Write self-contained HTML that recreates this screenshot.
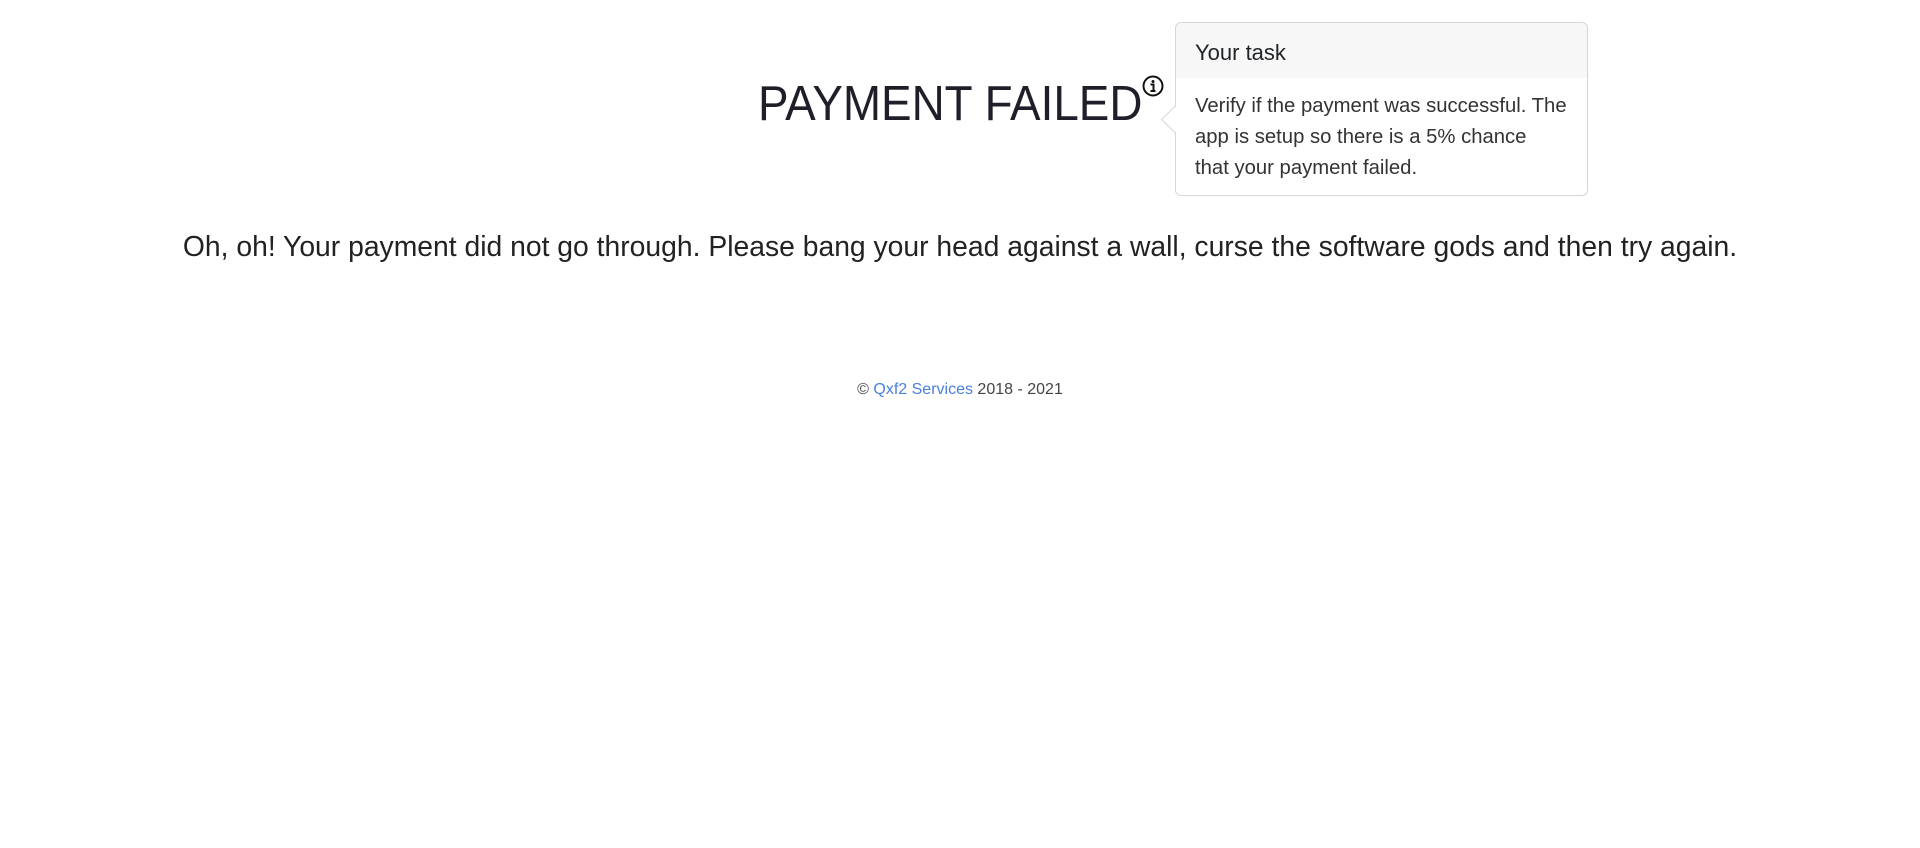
<!DOCTYPE html>
<html><head><meta charset="utf-8"><style>
body{margin:0;width:1920px;height:848px;background:#fff;position:relative;font-family:"Liberation Sans",sans-serif;color:#212529;overflow:hidden}
.abs{position:absolute;white-space:nowrap}
#title{left:758px;top:74px;font-size:49px;line-height:60px;transform:scaleX(0.935);transform-origin:0 0;color:#1f1f2a}
#pop{left:1175px;top:22px;width:411px;height:172px;border:1px solid #d6d6d6;border-radius:6px;background:#fff}
#pop .hd{height:55px;background:#f7f7f7;border-radius:6px 6px 0 0;font-size:22px;line-height:60px;padding-left:19px;color:#212529}
#pop .bd{padding:13px 19px 0;font-size:20.3px;line-height:31px;color:#333}
.arr{position:absolute;left:-11px;top:87px;width:18px;height:18px;background:#fff;border-left:1px solid #d6d6d6;border-bottom:1px solid #d6d6d6;transform:rotate(45deg)}
#msg{left:0;width:1920px;text-align:center;top:228px;font-size:28.3px;line-height:36px;color:#222}
#foot{left:0;width:1920px;text-align:center;top:380px;font-size:16px;line-height:20px;color:#444}
#foot a{color:#4a7fe0;text-decoration:none}
</style></head><body>
<div class="abs" id="title">PAYMENT FAILED</div>
<svg class="abs" style="left:1142px;top:75px" width="22" height="22" viewBox="0 0 22 22"><circle cx="11" cy="11" r="9.5" fill="none" stroke="#111" stroke-width="2"/><circle cx="11" cy="6.5" r="1.5" fill="#111"/><path d="M8.5 9.5h3v6M8.5 16h5" stroke="#111" stroke-width="2" fill="none"/></svg>
<div class="abs" id="pop"><div class="arr"></div><div style="position:relative"><div class="hd">Your task</div><div class="bd">Verify if the payment was successful. The<br>app is setup so there is a 5% chance<br>that your payment failed.</div></div></div>
<div class="abs" id="msg">Oh, oh! Your payment did not go through. Please bang your head against a wall, curse the software gods and then try again.</div>
<div class="abs" id="foot">© <a>Qxf2 Services</a> 2018 - 2021</div>
</body></html>
